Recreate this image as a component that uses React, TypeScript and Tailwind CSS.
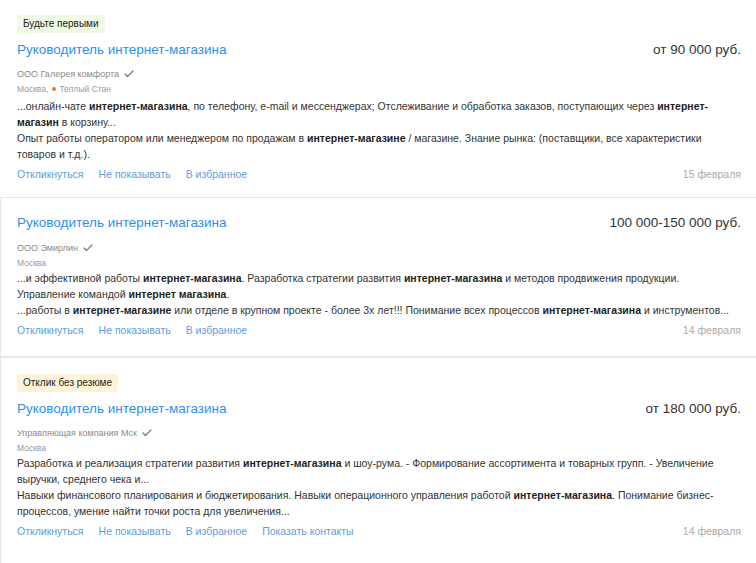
import { Check } from "lucide-react";
import type { ReactNode } from "react";

type Vacancy = {
  badge?: { text: string; className: string };
  salary: string;
  company: string;
  metro?: string;
  paragraphs: ReactNode[];
  date: string;
  contacts?: boolean;
  cardClass: string;
  companyGap: string;
  textGap: string;
};

const B = ({ children }: { children: ReactNode }) => (
  <b className="font-bold text-[#222]">{children}</b>
);

const vacancies: Vacancy[] = [
  {
    badge: { text: "Будьте первыми", className: "bg-[#eefae3]" },
    salary: "от 90 000 руб.",
    company: "ООО Галерея комфорта",
    metro: "Теплый Стан",
    paragraphs: [
      <>
        ...онлайн-чате <B>интернет-магазина</B>, по телефону, e-mail и мессенджерах; Отслеживание и обработка
        заказов, поступающих через <B>интернет-магазин</B> в корзину...
      </>,
      <>
        Опыт работы оператором или менеджером по продажам в <B>интернет-магазине</B> / магазине. Знание рынка:
        (поставщики, все характеристики товаров и т.д.).
      </>,
    ],
    date: "15 февраля",
    cardClass: "pl-[17px] pt-[15px] pb-[15px] border-b border-[#e6e6e6]",
    companyGap: "mt-[8px]",
    textGap: "mt-[2px]",
  },
  {
    salary: "100 000-150 000 руб.",
    company: "ООО Эмирлин",
    paragraphs: [
      <>
        ...и эффективной работы <B>интернет-магазина</B>. Разработка стратегии развития <B>интернет-магазина</B> и
        методов продвижения продукции. Управление командой <B>интернет магазина</B>.
      </>,
      <>
        ...работы в <B>интернет-магазине</B> или отделе в крупном проекте - более 3х лет!!! Понимание всех
        процессов <B>интернет-магазина</B> и инструментов...
      </>,
    ],
    date: "14 февраля",
    cardClass: "pl-[16px] pt-[16px] pb-[18px] border-l border-[#e6e6e6] border-b-2",
    companyGap: "mt-[9px]",
    textGap: "mt-0",
  },
  {
    badge: { text: "Отклик без резюме", className: "bg-[#fdf4d8]" },
    salary: "от 180 000 руб.",
    company: "Управляющая компания Мск",
    paragraphs: [
      <>
        Разработка и реализация стратегии развития <B>интернет-магазина</B> и шоу-рума. - Формирование
        ассортимента и товарных групп. - Увеличение выручки, среднего чека и...
      </>,
      <>
        Навыки финансового планирования и бюджетирования. Навыки операционного управления работой{" "}
        <B>интернет-магазина</B>. Понимание бизнес-процессов, умение найти точки роста для увеличения...
      </>,
    ],
    date: "14 февраля",
    contacts: true,
    cardClass: "pl-[16px] pt-[16px] pb-[28px] border-l border-[#e6e6e6]",
    companyGap: "mt-[8px]",
    textGap: "mt-0",
  },
];

function VacancyCard({ v }: { v: Vacancy }) {
  return (
    <div className={`bg-white pr-[15px] ${v.cardClass}`}>
      {v.badge && (
        <div className="mb-[8px] flex">
          <span
            className={`flex h-[18px] items-center rounded-[2px] px-[6px] text-[10px] leading-none text-[#222] ${v.badge.className}`}
          >
            {v.badge.text}
          </span>
        </div>
      )}
      <div className="flex items-center justify-between leading-[18px]">
        <a className="text-[13.5px] text-[#2d8ff2]">Руководитель интернет-магазина</a>
        <span className="text-[13.5px] text-[#333]">{v.salary}</span>
      </div>
      <div className={`${v.companyGap} flex items-center gap-[4px] text-[9px] leading-[14px] text-[#8a8a8a]`}>
        {v.company}
        <Check size={12} strokeWidth={2.4} className="text-[#777]" />
      </div>
      <div className="mt-[1px] flex items-center text-[8.5px] leading-[14px] text-[#999]">
        Москва{v.metro && ","}
        {v.metro && (
          <>
            <span className="ml-[4px] mr-[3px] inline-block h-[4px] w-[4px] rounded-full bg-[#f5701e]" />
            {v.metro}
          </>
        )}
      </div>
      <div className={`${v.textGap} mr-[10px] text-[10.5px] leading-[16px] text-[#333]`}>
        {v.paragraphs.map((p, i) => (
          <p key={i}>{p}</p>
        ))}
      </div>
      <div className="mt-[4px] flex items-center justify-between text-[10.5px] leading-[16px]">
        <div className="flex gap-[15px] text-[#5d9dd8]">
          <a>Откликнуться</a>
          <a>Не показывать</a>
          <a>В избранное</a>
          {v.contacts && <a>Показать контакты</a>}
        </div>
        <span className="text-[#aaa]">{v.date}</span>
      </div>
    </div>
  );
}

export default function App() {
  return (
    <div className="min-h-[563px] w-[756px] bg-white font-['Liberation_Sans',Arial,sans-serif]">
      {vacancies.map((v, i) => (
        <VacancyCard key={i} v={v} />
      ))}
    </div>
  );
}
